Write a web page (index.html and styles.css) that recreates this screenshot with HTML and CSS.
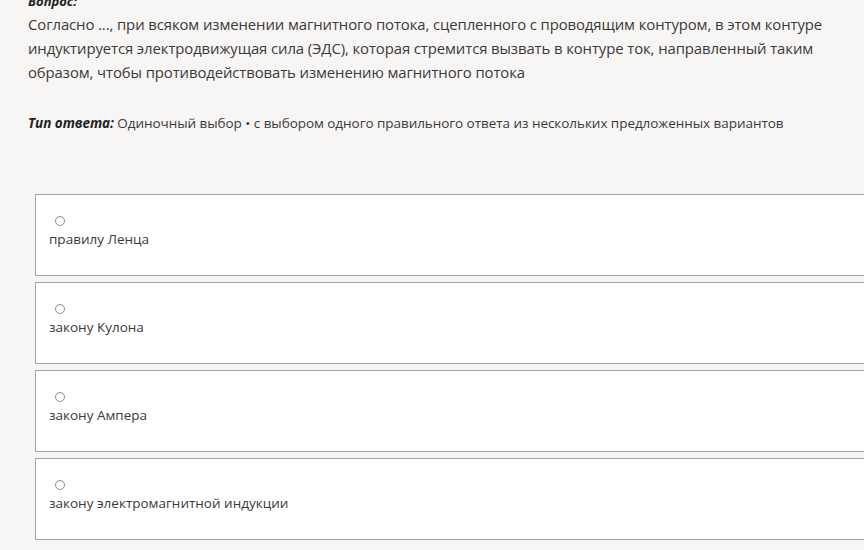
FILE: index.html
```html
<!DOCTYPE html>
<html lang="ru">
<head>
    <meta charset="UTF-8">
    <meta name="viewport" content="width=device-width, initial-scale=1.0">
    <title>Вопрос</title>
    <link rel="stylesheet" href="styles.css">
</head>
<body>
    <div class="question">
        <b class="label">Вопрос:</b>
        <p class="text">
            Согласно ..., при всяком изменении магнитного потока, сцепленного с проводящим контуром, в этом контуре
            индуктируется электродвижущая сила (ЭДС), которая стремится вызвать в контуре ток, направленный таким
            образом, чтобы противодействовать изменению магнитного потока
        </p>
        <p class="type"><b>Тип ответа:</b> Одиночный выбор • с выбором одного правильного ответа из нескольких предложенных вариантов</p>
    </div>

    <div class="answers">
        <label class="option">
            <input type="radio" name="answer">
            <span>правилу Ленца</span>
        </label>
        <label class="option">
            <input type="radio" name="answer">
            <span>закону Кулона</span>
        </label>
        <label class="option">
            <input type="radio" name="answer">
            <span>закону Ампера</span>
        </label>
        <label class="option">
            <input type="radio" name="answer">
            <span>закону электромагнитной индукции</span>
        </label>
    </div>
</body>
</html>
```

FILE: styles.css
```css
* {
    padding: 0;
    margin: 0;
    box-sizing: border-box;
}

body {
    font-family: 'Open Sans', 'Noto Sans', sans-serif;
    background: #f7f6f5;
    color: #3a3a3a;
    overflow: hidden;
}

.question {
    padding: 0 28px;
    margin-top: -9px;
}

.label {
    display: block;
    font-size: 13px;
    font-style: italic;
    line-height: 21px;
    color: #222;
}

.text {
    font-size: 14.9px;
    line-height: 24px;
    letter-spacing: -0.1px;
}

.type {
    margin-top: 29px;
    font-size: 13.5px;
    line-height: 20px;
    letter-spacing: -0.05px;
}

.type b {
    font-style: italic;
    color: #222;
}

/* Answer cards */
.answers {
    margin-top: 61px;
    margin-left: 35px;
    width: 900px;
    display: flex;
    flex-direction: column;
    gap: 6px;
}

.option {
    height: 82px;
    background: #fff;
    border: 1px solid #a5a5a5;
    padding: 21px 13px 0;
    display: flex;
    flex-direction: column;
    font-size: 13.5px;
    line-height: 20px;
}

.option input {
    appearance: none;
    -webkit-appearance: none;
    width: 10px;
    height: 10px;
    border: 1px solid #8c8c8c;
    border-radius: 50%;
    margin: 0 0 3px 6px;
    background: #fff;
}
```
